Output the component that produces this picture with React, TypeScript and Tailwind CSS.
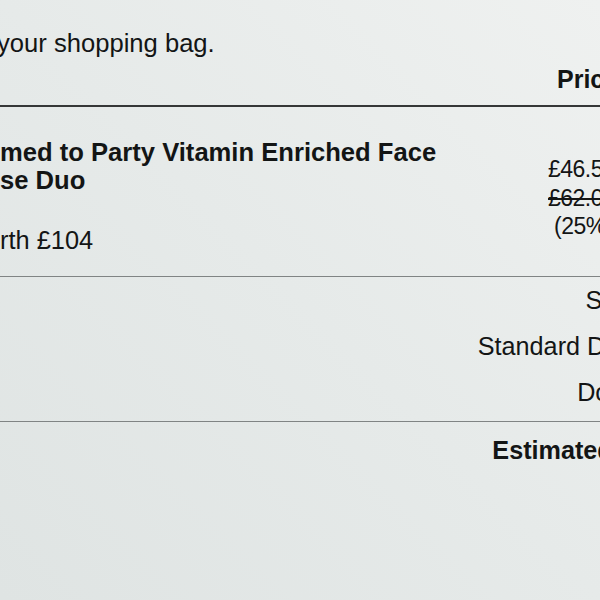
export default function App() {
  return (
    <div className="w-[600px] h-[600px] overflow-hidden bg-gradient-to-tr from-[#dfe4e3] via-[#e6eae9] to-[#eff1f0] text-[#131515] font-['Liberation_Sans',Arial,sans-serif]">
      <div className="w-[760px]">
        <div className="pt-[28px] pb-[12px] border-b-2 border-[#353737]">
          <p className="text-[25.6px] leading-[30px] -ml-[3px]">your shopping bag.</p>
          <div className="mt-[7px] grid grid-cols-[557px_1fr]">
            <div />
            <div className="font-bold text-[25px] leading-[28px]">Price</div>
          </div>
        </div>

        <div className="grid grid-cols-[548px_64px_1fr] border-b border-[#808484]">
          <div className="pt-[31px] pb-[22px]">
            <div className="font-bold text-[25.6px] leading-[28px] whitespace-nowrap">
              <div>med to Party Vitamin Enriched Face</div>
              <div>se Duo</div>
            </div>
            <div className="mt-[32px] text-[25.4px] leading-[28px] whitespace-nowrap">rth £104</div>
          </div>
          <div className="pt-[48px] text-[23px] tracking-[-0.5px] leading-[28.5px] whitespace-nowrap flex flex-col items-start">
            <span>£46.50</span>
            <span className="line-through">£62.00</span>
            <span className="pl-[6px]">(25%)</span>
          </div>
          <div />
        </div>

        <div className="pb-[6px] border-b border-[#808484]">
          {[
            ["Subtotal", "£46.50"],
            ["Standard Delivery", "£3.95"],
            ["Donation", "£0.00"],
          ].map(([label, value]) => (
            <div key={label} className="grid grid-cols-[678px_1fr] text-[25.2px] leading-[46px]">
              <div className="text-right whitespace-nowrap">{label}</div>
              <div className="pl-4 whitespace-nowrap">{value}</div>
            </div>
          ))}
        </div>

        <div className="pt-[14px] grid grid-cols-[678px_1fr] font-bold text-[25.2px] leading-[28px]">
          <div className="text-right whitespace-nowrap">Estimated Total</div>
          <div className="pl-4 whitespace-nowrap">£50.45</div>
        </div>
      </div>
    </div>
  );
}
